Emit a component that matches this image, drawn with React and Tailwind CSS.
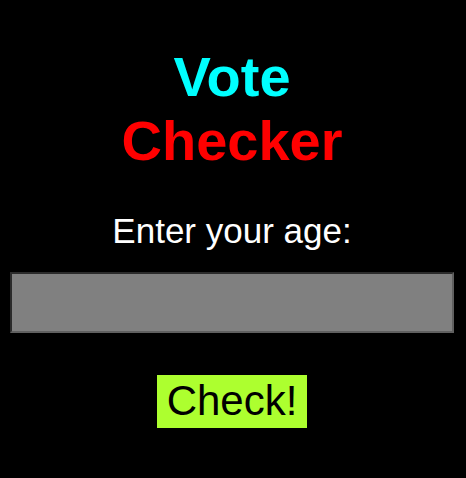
export default function App() {
  return (
    <div className="min-h-[478px] w-full bg-black font-['Liberation_Sans',Arial,sans-serif]">
      <div className="w-[464px] flex flex-col items-center">
        <h1 className="mt-[45px] text-[56px] font-bold leading-[64.35px] text-center">
          <span className="block text-[#00ffff]">Vote</span>
          <span className="block text-[#ff0000]">Checker</span>
        </h1>
        <label className="mt-[37px] text-[35px] leading-[40px] text-white">Enter your age:</label>
        <input
          type="text"
          className="mt-[21px] self-start ml-[10px] w-[444px] h-[61px] bg-[#808080] border-2 border-t-[#2b2b2b] border-l-[#2b2b2b] border-b-[#606060] border-r-[#606060] outline-none"
        />
        <button className="mt-[42px] w-[150px] h-[53px] bg-[#adff2f] text-black text-[42px] leading-[48px] flex items-center justify-center">
          Check!
        </button>
      </div>
    </div>
  );
}
